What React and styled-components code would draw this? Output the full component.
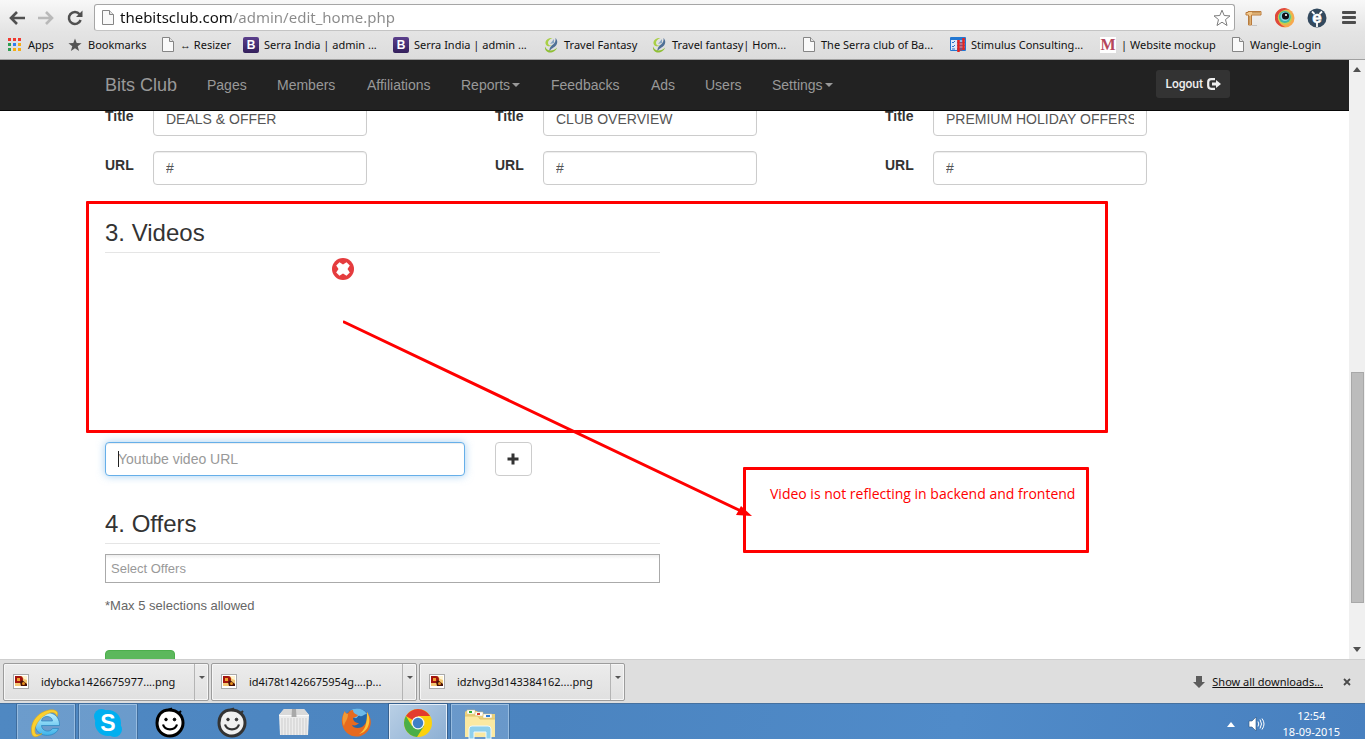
import React from "react";
import styled, { createGlobalStyle, css } from "styled-components";

const ui = `"Noto Sans", "Open Sans", sans-serif`;
const arial = `"Liberation Sans", Arial, sans-serif`;

const Global = createGlobalStyle`
  * { box-sizing: border-box; }
  html, body, #root { height: 100%; margin: 0; }
  body { overflow: hidden; background: #fff; }
  button, input { font: inherit; margin: 0; }
  svg { display: block; flex: none; }
`;

const Screen = styled.div`
  display: flex;
  flex-direction: column;
  height: 100vh;
  overflow: hidden;
`;

/* ---------- browser chrome ---------- */

const Chrome = styled.header`
  flex: none;
  background: linear-gradient(#f8f8f8, #e4e4e4 32px, #dcdcdc);
  border-bottom: 1px solid #a0a0a0;
  font-family: ${ui};
`;

const Toolbar = styled.div`
  display: flex;
  align-items: center;
  height: 32px;
  padding: 4px 0 1px 7px;
`;

const ToolButton = styled.button`
  display: flex;
  align-items: center;
  justify-content: center;
  flex: none;
  width: ${(p) => p.$w || 32}px;
  height: 27px;
  padding: 0;
  border: 0;
  background: none;
`;

const Omnibox = styled.div`
  display: flex;
  align-items: center;
  flex: 1;
  min-width: 0;
  height: 27px;
  margin: 0 2px 0 9px;
  padding: 0 3px 0 7px;
  background: #fff;
  border: 1px solid #a6a6a6;
  border-bottom-color: #c4c4c4;
  border-radius: 3px;
`;

const Address = styled.input`
  flex: 1;
  min-width: 0;
  height: 25px;
  margin-left: 6px;
  padding: 0 0 2px;
  border: 0;
  outline: 0;
  font-family: ${ui};
  font-size: 15px;
  color: transparent;
  background: linear-gradient(to right, #111 112px, #8a8a8a 112px);
  -webkit-background-clip: text;
  background-clip: text;
`;

const Bookmarks = styled.nav`
  display: flex;
  align-items: center;
  height: 27px;
  padding: 0 0 2px 8px;
`;

const Bookmark = styled.a`
  display: flex;
  align-items: center;
  gap: ${(p) => p.$gap || 5}px;
  flex: none;
  width: ${(p) => p.$w}px;
  font-size: 11px;
  line-height: 16px;
  white-space: nowrap;
  color: #111;
  text-decoration: none;
`;

const Badge = styled.span`
  display: flex;
  align-items: center;
  justify-content: center;
  flex: none;
  width: 16px;
  height: 16px;
  border-radius: ${(p) => (p.$serif ? 0 : 2)}px;
  background: ${(p) => (p.$serif ? "#fff" : "linear-gradient(#5b3f8c, #34205c)")};
  color: ${(p) => (p.$serif ? "#b5475c" : "#fff")};
  font: bold ${(p) => (p.$serif ? 16 : 12)}px/16px ${(p) => (p.$serif ? `"Liberation Serif", serif` : arial)};
`;

/* ---------- page ---------- */

const Viewport = styled.div`
  display: flex;
  flex: 1;
  min-height: 0;
`;

const Page = styled.main`
  display: flex;
  flex-direction: column;
  flex: 1;
  min-width: 0;
  background: #fff;
  color: #333;
  font: 14px/20px ${arial};
`;

const containerBox = css`
  width: 100%;
  max-width: 1171px;
  margin: 0 auto;
  padding: 0 15px 0 16px;
`;

const Navbar = styled.div`
  flex: none;
  background: #222;
  border-bottom: 1px solid #080808;
`;

const NavInner = styled.nav`
  ${containerBox}
  display: flex;
  height: 50px;
`;

const Brand = styled.a`
  width: 87px;
  padding: 15px 0;
  font-size: 18px;
  color: #999;
  text-decoration: none;
`;

const NavLink = styled.a`
  display: flex;
  align-items: center;
  gap: 2px;
  width: ${(p) => p.$w}px;
  padding: 0 0 0 15px;
  color: #999;
  text-decoration: none;
`;

const Caret = styled.span`
  border: 4px solid transparent;
  border-top-color: currentColor;
  border-bottom-width: 0;
`;

const Logout = styled.button`
  display: flex;
  align-items: center;
  gap: 4px;
  height: 28px;
  margin: 10px 15px 0 auto;
  padding: 0 9px;
  border: 0;
  border-radius: 3px;
  background: #333;
  color: #eee;
  font: 500 12px/18px Roboto, sans-serif;
`;

const Scroller = styled.div`
  flex: 1;
  min-height: 0;
  overflow: hidden;
`;

/* The form is scrolled part-way: its first row starts under the navbar. */
const Content = styled.form`
  ${containerBox}
  position: relative;
  margin-top: -9px;
`;

const Columns = styled.div`
  display: grid;
  grid-template-columns: repeat(3, 1fr);
  gap: 15px 30px;
`;

const Field = styled.label`
  display: grid;
  grid-template-columns: 48px 214px;
  font-weight: bold;
  line-height: 28px;
`;

const TextInput = styled.input`
  width: 100%;
  height: 34px;
  padding: 6px 12px;
  border: 1px solid #ccc;
  border-radius: 4px;
  outline: 0;
  background: #fff;
  box-shadow: inset 0 1px 1px rgba(0, 0, 0, 0.075);
  color: #555;
  font: 14px/20px ${arial};
  &::placeholder { color: #999; }
  ${(p) => p.$active && css`
    border-color: #66afe9;
    box-shadow: inset 0 1px 1px rgba(0, 0, 0, 0.075), 0 0 8px rgba(102, 175, 233, 0.6);
  `}
`;

const Heading = styled.h3`
  width: 555px;
  max-width: 100%;
  margin: 35px 0 0;
  padding-bottom: 6px;
  border-bottom: 1px solid #e5e5e5;
  font-size: 24px;
  font-weight: normal;
  line-height: 26px;
`;

const VideoFrame = styled.div`
  display: flex;
  justify-content: flex-end;
  align-items: flex-start;
  width: 249px;
  height: 189px;
  padding-top: 5px;
`;

const RemoveButton = styled.button`
  padding: 0;
  border: 0;
  background: none;
`;

const VideoRow = styled.div`
  display: flex;
  gap: 30px;
`;

const VideoField = styled.div`
  position: relative;
  width: 360px;
`;

const TextCursor = styled.span`
  position: absolute;
  left: 13px;
  top: 9px;
  width: 1px;
  height: 16px;
  background: #222;
`;

const AddButton = styled.button`
  display: flex;
  align-items: center;
  justify-content: center;
  width: 37px;
  height: 34px;
  padding: 0;
  border: 1px solid #ccc;
  border-radius: 4px;
  background: #fff;
`;

const OfferInput = styled.input`
  display: block;
  width: 555px;
  max-width: 100%;
  height: 29px;
  margin-top: 10px;
  padding: 0 5px;
  border: 1px solid #aaa;
  outline: 0;
  background: linear-gradient(#eee, #fff 4px);
  font: 13px/20px ${arial};
  &::placeholder { color: #999; }
`;

const Hint = styled.p`
  margin: 13px 0 34px;
  color: #666;
  font-size: 13px;
`;

const SaveButton = styled.button`
  display: block;
  width: 70px;
  height: 34px;
  border: 1px solid #4cae4c;
  border-radius: 4px;
  background: #5cb85c;
`;

/* ---------- red review marks laid over the page ---------- */

const Mark = styled.div`
  position: absolute;
  left: ${(p) => p.$x}px;
  top: ${(p) => p.$y}px;
  width: ${(p) => p.$w}px;
  height: ${(p) => p.$h}px;
  border: 3px solid #f00;
  border-radius: 1px;
  pointer-events: none;
`;

const MarkNote = styled.p`
  margin: 14px 0 0 24px;
  color: #f00;
  font: 14px/20px "Open Sans", sans-serif;
  white-space: nowrap;
`;

const Arrow = styled.svg`
  position: absolute;
  left: 254px;
  top: 218px;
  pointer-events: none;
`;

/* ---------- scrollbar ---------- */

const Scrollbar = styled.div`
  display: flex;
  flex-direction: column;
  align-items: center;
  flex: none;
  width: 16px;
  padding: 7px 0;
  background: #f0f0f0;
`;

const Thumb = styled.div`
  width: 13px;
  height: 231px;
  margin: auto 0 44px;
  border: 1px solid #a8a8a8;
  background: #bcbcbc;
`;

/* ---------- downloads ---------- */

const Downloads = styled.footer`
  display: flex;
  align-items: center;
  gap: 2px;
  flex: none;
  height: 44px;
  padding: 0 14px 0 3px;
  border-top: 1px solid #cfcfcf;
  background: #dedede;
  font: 11px/16px ${ui};
  color: #111;
`;

const DownloadItem = styled.div`
  display: flex;
  flex: none;
  width: 206px;
  height: 38px;
  border: 1px solid #9c9c9c;
  border-radius: 2px;
  background: linear-gradient(#ececec, #e0e0e0);
  box-shadow: inset 0 0 0 1px #f6f6f6;
`;

const FileButton = styled.button`
  display: flex;
  align-items: center;
  gap: 12px;
  flex: 1;
  min-width: 0;
  padding: 0 0 0 9px;
  border: 0;
  background: none;
  color: inherit;
  white-space: nowrap;
`;

const MenuButton = styled.button`
  display: flex;
  justify-content: center;
  width: 14px;
  padding: 12px 0 0;
  border: 0;
  border-left: 1px solid #b4b4b4;
  background: none;
  color: #555;
`;

const SmallCaret = styled.span`
  border: 3px solid transparent;
  border-top-color: currentColor;
  border-bottom-width: 0;
`;

const ShowAll = styled.a`
  margin: 0 18px 0 5px;
  color: #111;
  text-decoration: underline;
`;

const CloseButton = styled.button`
  padding: 0;
  border: 0;
  background: none;
`;

const Spacer = styled.div`
  flex: 1;
`;

/* ---------- taskbar ---------- */

const Taskbar = styled.footer`
  display: flex;
  gap: 4px;
  flex: none;
  height: 36px;
  padding-left: 17px;
  border-top: 1px solid #46719f;
  background: linear-gradient(100deg, #4f88c2, #4b84c0 40%, #508bc9 70%, #4880bf);
  color: #fff;
  font: 11px/16px ${ui};
`;

const Task = styled.button`
  display: flex;
  justify-content: center;
  width: 58px;
  padding: 3px 0 0;
  border: 0 solid transparent;
  border-width: 0 1px;
  background: none;
  ${(p) => p.$open && css`
    border-color: #97bce0;
    background: rgba(255, 255, 255, 0.17);
    box-shadow: inset 0 1px #9dc0e2, 0 0 0 1px #3f6d9e;
  `}
  ${(p) => p.$active && css`
    border-color: #e4eef8;
    background: linear-gradient(135deg, #b9cfe5, #8db0d4);
    box-shadow: inset 0 1px #e4eef8, 0 0 0 1px #37618f;
  `}
`;

const Tray = styled.div`
  display: flex;
  align-items: center;
  gap: 13px;
  margin: 5px 25px 0 auto;
`;

const Clock = styled.time`
  margin: 0 0 0 5px;
  text-align: center;
`;

/* ---------- drawings ---------- */

const PageIcon = () => (
  <svg width="12" height="15" viewBox="0 0 12 15">
    <path d="M.5.5h7l4 4v10H.5z" fill="#f9f9f9" stroke="#858585" />
    <path d="M7.5.5v4h4" fill="#e4e4e4" stroke="#858585" />
  </svg>
);

const BackIcon = ({ color }) => (
  <svg width="16" height="14" viewBox="0 0 16 14" fill="none" stroke={color} strokeWidth="2.6">
    <path d="M8 1 2 7l6 6M2.500 7H16" />
  </svg>
);

const ForwardIcon = ({ color }) => (
  <svg width="16" height="14" viewBox="0 0 16 14" fill="none" stroke={color} strokeWidth="2.6">
    <path d="m8 1 6 6-6 6M13.500 7H0" />
  </svg>
);

const ReloadIcon = () => (
  <svg width="16" height="16" viewBox="0 0 16 16">
    <path d="M12.600 4.200A6 6 0 1 0 13.600 10" fill="none" stroke="#505050" strokeWidth="2.500" />
    <path d="M15.500.5v6.500H9z" fill="#505050" />
  </svg>
);

const AppsIcon = () => (
  <svg width="14" height="14" viewBox="0 0 14 14">
    {["#f0392f", "#f0392f", "#f0392f", "#2f9e52", "#2f7df0", "#f5ac14", "#2f9e52", "#f5ac14", "#f5ac14"].map((c, i) => (
      <rect key={i} x={(i % 3) * 5} y={Math.floor(i / 3) * 5} width="3" height="3" fill={c} />
    ))}
  </svg>
);

const StarSolid = () => (
  <svg width="14" height="14" viewBox="0 0 14 14">
    <path d="m7 .5 1.700 4.600 4.900.2-3.900 3 1.400 4.700L7 10.300 2.900 13l1.400-4.700-3.900-3 4.900-.2z" fill="#555" />
  </svg>
);

const StarOutline = () => (
  <svg width="18" height="18" viewBox="0 0 18 18">
    <path d="m9 1.200 2.200 5.300 5.800.4-4.500 3.700 1.500 5.900-5-3.300-5 3.300 1.500-5.900L1 6.900l5.800-.4z" fill="#fff" stroke="#7d7d7d" strokeLinejoin="round" />
  </svg>
);

const RulerIcon = () => (
  <svg width="17" height="18" viewBox="0 0 17 18">
    <path d="M3 2.500h13v3.500H6.500V16h-3V6H1V3.500h2z" fill="#f3c98c" stroke="#b97b3d" />
    <path d="M8 3v1.500m2-1.500v1.500m2-1.500v1.500m2-1.500v1.500M4 8h1.500M4 10h1.500M4 12h1.500M4 14h1.500" stroke="#9c6a33" />
    <path d="M7 16.500h5" stroke="#c4c4c4" />
  </svg>
);

const EyeIcon = () => (
  <svg width="20" height="20" viewBox="0 0 20 20">
    <circle cx="10" cy="10" r="9.500" fill="#f7a84e" />
    <path d="M15 2A9.500 9.500 0 1 0 10 19 8 8 0 0 1 15 2z" fill="#e0483c" />
    <circle cx="10" cy="9.500" r="7.200" fill="#c4cf4c" />
    <circle cx="9.800" cy="9" r="6" fill="#3fb8a8" />
    <circle cx="10" cy="8.500" r="4.500" fill="#8fd6e6" />
    <circle cx="10.500" cy="8" r="3.600" fill="#101016" />
    <circle cx="11" cy="7" r="1.100" fill="#fff" />
  </svg>
);

const DarkEIcon = () => (
  <svg width="20" height="20" viewBox="0 0 20 20">
    <circle cx="10" cy="10" r="9.500" fill="#33495e" />
    <path d="M5 3.500 7.500 6M15 3.500 12.500 6M10 14v5" stroke="#fff" strokeWidth="1.800" />
    <text x="10" y="14.500" textAnchor="middle" fill="#fff" stroke="#fff" strokeWidth=".6" fontFamily="Liberation Sans, sans-serif" fontWeight="bold" fontSize="17">e</text>
  </svg>
);

const MenuIcon = () => (
  <svg width="14" height="13" viewBox="0 0 14 13" fill="#4d4d4d">
    <rect width="14" height="3" rx="1" />
    <rect y="5" width="14" height="3" rx="1" />
    <rect y="10" width="14" height="3" rx="1" />
  </svg>
);

const SwirlIcon = () => (
  <svg width="14" height="16" viewBox="0 0 14 16">
    <path d="M8.500 1C4 .5 1 3.500 1.500 6.500 2 9.500 6 10 9 8.500 6 9 4 8 4 6c0-2.500 2-4 4.500-5z" fill="#a9cf46" />
    <path d="M11.500 1c2 2 2.500 5 .5 7.500-2 2.300-5 2.800-6.500 6C5 11 7 9 9 7.500c1.800-1.500 3-3.500 2.500-6.500z" fill="#4f7096" />
    <path d="M10 2 6 7l4-1z" fill="#88a6c2" />
    <path d="M1 9.500c-.5 3.500 2 6 5 6s6-1.500 7-5c-1.500 2-4 3-6.500 3S2 12 1 9.500z" fill="#8fbf35" />
  </svg>
);

const ConsultIcon = () => (
  <svg width="16" height="15" viewBox="0 0 16 15">
    <rect width="16" height="14" rx="1" fill="#2277d2" />
    <rect x="1" y="3" width="6" height="10" fill="#dfeaf8" />
    <path d="m2 5 1 1 2-2M2 9l1 1 2-2M2 12h3" stroke="#2f6fc9" fill="none" />
    <path d="M7 4h8M7 7h8M7 10h8" stroke="#fff" strokeWidth="1" />
    <path d="M8.500 3v12M13.500 1v12" stroke="#e8231c" strokeWidth="2.500" />
    <path d="M11 5v9" stroke="#e8231c" strokeWidth="1" />
  </svg>
);

const LogoutIcon = () => (
  <svg width="14" height="12" viewBox="0 0 14 12">
    <path d="M8 1.200H4.200a3 3 0 0 0-3 3v3.600a3 3 0 0 0 3 3H8" fill="none" stroke="#eee" strokeWidth="2.200" />
    <path d="M5 4.500h4V2l5 4-5 4V7.500H5z" fill="#eee" />
  </svg>
);

const RemoveIcon = () => (
  <svg width="22" height="22" viewBox="0 0 22 22">
    <circle cx="11" cy="11" r="11" fill="#e53c3e" />
    <path d="M7.500 4.200 11 6.500l3.500-2.300 3.300 3.300-2.300 3.500 2.300 3.500-3.300 3.300-3.500-2.300-3.500 2.300-3.300-3.300L6.500 11 4.200 7.500z" fill="#fff" />
  </svg>
);

const PlusIcon = () => (
  <svg width="13" height="13" viewBox="0 0 13 13">
    <path d="M4.500.5h3v4h4v3h-4v4h-3v-4h-4v-3h4z" fill="#333" />
  </svg>
);

const Triangle = ({ up, color = "#505050" }) => (
  <svg width="8" height="5" viewBox="0 0 8 5">
    <path d={up ? "M4 0l4 5H0z" : "M0 0h8L4 5z"} fill={color} />
  </svg>
);

const FileIcon = () => (
  <svg width="16" height="15" viewBox="0 0 16 15">
    <rect x=".5" y=".5" width="15" height="14" fill="#fff" stroke="#a9a9a9" />
    <rect x="2" y="2" width="12" height="10" fill="#f4c873" />
    <path d="M2 2h5c4 0 4 6 0 7H2z" fill="#a3140d" />
    <path d="M9 2h5v4l-3-1z" fill="#fff3cf" />
    <rect x="4" y="4" width="3" height="3" fill="#f0a030" />
    <path d="M7 8 9 6l5 4v2H8z" fill="#4a1208" />
    <circle cx="10.500" cy="9.500" r="1.500" fill="#e8901c" />
  </svg>
);

const DownIcon = () => (
  <svg width="12" height="12" viewBox="0 0 12 12">
    <path d="M3 0h6v6h3l-6 6-6-6h3z" fill="#5c5c5c" />
  </svg>
);

const CloseIcon = () => (
  <svg width="8" height="8" viewBox="0 0 8 8">
    <path d="m1 1 6 6m0-6L1 7" stroke="#4a4a4a" strokeWidth="1.800" />
  </svg>
);

const IEIcon = () => (
  <svg width="32" height="32" viewBox="0 0 32 32">
    <defs>
      <linearGradient id="ie" x2="0" y2="1">
        <stop offset="0" stopColor="#c4f1fd" />
        <stop offset="1" stopColor="#3db3ea" />
      </linearGradient>
    </defs>
    <path d="M29.500 18.500H11.500c.3 6 8.500 7.500 11 3h6C25 31.500 5 31 5 17 5 2 30 1 29.500 18.500zM11.500 14h11c-.5-6-10.500-6-11 0z" fill="url(#ie)" stroke="#2784c0" strokeWidth=".7" />
    <path d="M27 9.500C33-3-.5 2 1.500 25c.8 7.500 7 4.500 10.500 1.500-4 1.800-6.500 1.500-7-1.500C3.500 13 24-1.500 27 9.500z" fill="#fbd02f" stroke="#d69d10" strokeWidth=".5" />
  </svg>
);

const SkypeIcon = () => (
  <svg width="32" height="32" viewBox="0 0 32 32">
    <circle cx="16" cy="16" r="13" fill="#00aff0" />
    <circle cx="9.500" cy="9.500" r="7.500" fill="#00aff0" />
    <circle cx="22.500" cy="22.500" r="7.500" fill="#00aff0" />
    <text x="16" y="24" textAnchor="middle" fill="#fff" fontFamily="Liberation Sans, sans-serif" fontWeight="bold" fontSize="23">S</text>
  </svg>
);

const SmileIcon = ({ ink, face }) => (
  <svg width="32" height="32" viewBox="0 0 32 32" fill="none" stroke={ink}>
    <path d="M15 3C7 3 3 9 3 16c0 8 6 13 13 13s13-6 13-13S24 3 15 3z" fill={face} strokeWidth="3" />
    <path d="m14 3 4-1.500M25 6l2-2" strokeWidth="2" />
    <path d="M9 17.500c2 6.500 12 6.500 14 0" strokeWidth="2.200" />
    <circle cx="12" cy="12.500" r="1.300" fill={ink} />
    <circle cx="20.500" cy="12.500" r="1.300" fill={ink} />
  </svg>
);

const BoxIcon = () => (
  <svg width="32" height="32" viewBox="0 0 32 32">
    <path d="M6 2h20l5 6-1 20H2L1 8z" fill="#ececec" />
    <path d="M6 2h20l5 6H1z" fill="#d9d9d9" />
    <path d="M4 11v17m3-17v17m3-17v17m3-17v17m3-17v17m3-17v17m3-17v17m3-17v17m3-17v17" stroke="#cdcdcd" />
    <path d="M1 8.500h30" stroke="#fafafa" />
    <path d="M14 2h4l.5 8h-5z" fill="#a9a9a9" />
  </svg>
);

const FirefoxIcon = () => (
  <svg width="32" height="32" viewBox="0 0 32 32">
    <circle cx="17" cy="14" r="12.500" fill="#2465a8" />
    <path d="M10 4c5-4 13-3 17 3-3 0-4 3-7 2s-2 3-5 2-4-4-5-7z" fill="#6db9e8" />
    <path d="M5 4c-5 7-4 17 2 22 8 7 20 3 23-6 2-6 0-11-3-15 1 5 0 12-5 15-4 2-9 1-10-2 3 1 5 0 7-2-3 0-6-2-6-5 2-1 4-1 5-3-3-1-5-2-5-5-2 0-4 1-5 3C6 7 5 6 5 4z" fill="#e66a1f" />
    <path d="M27 5c5 8 2 20-8 22 6-4 8-9 8-22z" fill="#fbc33a" />
    <path d="M5 4c-3 5-3 11-1 15 1-5 4-6 4-12-2 0-3-1-3-3z" fill="#f19a35" />
  </svg>
);

const ChromeIcon = () => (
  <svg width="32" height="32" viewBox="0 0 32 32">
    <circle cx="16" cy="16" r="14" fill="#fcd20b" />
    <path d="M16 16 3.900 9A14 14 0 0 1 28.100 9H16z" fill="#e33b2e" />
    <path d="M3.900 9A14 14 0 0 0 15 30l7-11-6-3-6 3z" fill="#4aae48" />
    <circle cx="16" cy="16" r="6.500" fill="#f4f4f4" />
    <circle cx="16" cy="16" r="5.200" fill="#3f7fc6" />
  </svg>
);

const FolderIcon = () => (
  <svg width="34" height="32" viewBox="0 0 34 32">
    <path d="M3 4h11l2 3h16v23H2V5z" fill="#ecd27c" />
    <path d="M4 3h8v4H4zM12 5h8v4h-8zM20 7h9v4h-9z" fill="#fff" stroke="#d9c27a" strokeWidth=".5" />
    <path d="M6 4h3v2H6z" fill="#2bad36" />
    <path d="M14 6h3v2h-3z" fill="#d83a2b" />
    <path d="M23 8h4v2h-4z" fill="#2f7fd8" />
    <path d="M2 9h13l2 3h15v18H2z" fill="#fbe9a2" />
    <path d="M2 9h13l2 3h15" fill="none" stroke="#e3c56c" />
    <path d="M6 32V22q0-3 3-3h16q3 0 3 3v10h-5v-7H11v7z" fill="#8fd0ec" stroke="#eaf8fe" />
  </svg>
);

const SpeakerIcon = () => (
  <svg width="17" height="16" viewBox="0 0 17 16" fill="none" stroke="#fff">
    <path d="M1 5h3l4-4v14l-4-4H1z" fill="#fff" stroke="#2c5580" strokeWidth=".6" />
    <path d="M10 5.500q1.500 2.500 0 5M12 3.500q3 4.500 0 9M14 2.500q4 5.500 0 11" />
  </svg>
);

/* ---------- data ---------- */

const bookmarks = [
  ["Apps", 60, <AppsIcon />, 6],
  ["Bookmarks", 94, <StarSolid />, 6],
  ["↔ Resizer", 81, <PageIcon />, 6],
  ["Serra India | admin ...", 150, <Badge>B</Badge>, 5],
  ["Serra India | admin ...", 151, <Badge>B</Badge>, 5],
  ["Travel Fantasy", 108, <SwirlIcon />, 6],
  ["Travel fantasy| Hom...", 151, <SwirlIcon />, 6],
  ["The Serra club of Ba...", 147, <PageIcon />, 6],
  ["Stimulus Consulting...", 150, <ConsultIcon />, 5],
  ["| Website mockup", 132, <Badge $serif>M</Badge>, 5],
  ["Wangle-Login", 94, <PageIcon />, 6],
];

const navLinks = [
  ["Pages", 70],
  ["Members", 90],
  ["Affiliations", 94],
  ["Reports", 90, true],
  ["Feedbacks", 100],
  ["Ads", 54],
  ["Users", 67],
  ["Settings", 92, true],
];

const titles = ["DEALS & OFFER", "CLUB OVERVIEW", "PREMIUM HOLIDAY OFFERS"];
const files = ["idybcka1426675977....png", "id4i78t1426675954g....p...", "idzhvg3d143384162....png"];

const tasks = [
  ["Internet Explorer", <IEIcon />, true],
  ["Skype", <SkypeIcon />, true],
  ["Balsamiq", <SmileIcon ink="#000" face="#fff" />],
  ["Balsamiq Mockups", <SmileIcon ink="#333" face="#f0f0f0" />],
  ["Package", <BoxIcon />],
  ["Firefox", <FirefoxIcon />],
  ["Chrome", <ChromeIcon />, true, true],
  ["File Explorer", <FolderIcon />, true],
];

export default function App() {
  return (
    <Screen>
      <Global />
      <Chrome>
        <Toolbar>
          <ToolButton $w={20} aria-label="Back"><BackIcon color="#505050" /></ToolButton>
          <ToolButton $w={38} aria-label="Forward"><ForwardIcon color="#b9b9b9" /></ToolButton>
          <ToolButton $w={20} aria-label="Reload"><ReloadIcon /></ToolButton>
          <Omnibox>
            <PageIcon />
            <Address aria-label="Address" defaultValue="thebitsclub.com/admin/edit_home.php" spellCheck={false} />
            <StarOutline />
          </Omnibox>
          <ToolButton aria-label="Page ruler"><RulerIcon /></ToolButton>
          <ToolButton aria-label="Colour picker"><EyeIcon /></ToolButton>
          <ToolButton aria-label="Extension"><DarkEIcon /></ToolButton>
          <ToolButton aria-label="Menu"><MenuIcon /></ToolButton>
        </Toolbar>
        <Bookmarks>
          {bookmarks.map(([label, w, icon, gap], i) => (
            <Bookmark key={i} href="#" $w={w} $gap={gap}>{icon}{label}</Bookmark>
          ))}
        </Bookmarks>
      </Chrome>

      <Viewport>
        <Page>
          <Navbar>
            <NavInner>
              <Brand href="#">Bits Club</Brand>
              {navLinks.map(([label, w, menu]) => (
                <NavLink key={label} href="#" $w={w}>{label}{menu && <Caret />}</NavLink>
              ))}
              <Logout>Logout <LogoutIcon /></Logout>
            </NavInner>
          </Navbar>
          <Scroller>
            <Content onSubmit={(e) => e.preventDefault()}>
              <Columns>
                {titles.map((t) => (
                  <Field key={t}>Title<TextInput defaultValue={t} /></Field>
                ))}
                {titles.map((t) => (
                  <Field key={t + "-url"}>URL<TextInput defaultValue="#" /></Field>
                ))}
              </Columns>

              <Heading>3. Videos</Heading>
              <VideoFrame>
                <RemoveButton type="button" aria-label="Remove video"><RemoveIcon /></RemoveButton>
              </VideoFrame>
              <VideoRow>
                <VideoField>
                  <TextInput $active aria-label="Youtube video URL" placeholder="Youtube video URL" />
                  <TextCursor />
                </VideoField>
                <AddButton type="button" aria-label="Add video"><PlusIcon /></AddButton>
              </VideoRow>

              <Heading>4. Offers</Heading>
              <OfferInput aria-label="Select Offers" placeholder="Select Offers" />
              <Hint>*Max 5 selections allowed</Hint>
              <SaveButton aria-label="Save" />

              <Mark $x={-3} $y={99} $w={1022} $h={232} />
              <Mark $x={654} $y={365} $w={346} $h={86}>
                <MarkNote>Video is not reflecting in backend and frontend</MarkNote>
              </Mark>
              <Arrow width="412" height="200" viewBox="0 0 412 200">
                <path d="M1 2 398 191" stroke="#f00" strokeWidth="3" strokeLinecap="round" />
                <path d="m409 196-16-1 5-9z" fill="#f00" />
              </Arrow>
            </Content>
          </Scroller>
        </Page>
        <Scrollbar>
          <Triangle up />
          <Thumb />
          <Triangle />
        </Scrollbar>
      </Viewport>

      <Downloads>
        {files.map((f) => (
          <DownloadItem key={f}>
            <FileButton><FileIcon />{f}</FileButton>
            <MenuButton aria-label="File options"><SmallCaret /></MenuButton>
          </DownloadItem>
        ))}
        <Spacer />
        <DownIcon />
        <ShowAll href="#">Show all downloads...</ShowAll>
        <CloseButton aria-label="Close"><CloseIcon /></CloseButton>
      </Downloads>

      <Taskbar>
        {tasks.map(([name, icon, open, active]) => (
          <Task key={name} aria-label={name} $open={open} $active={active}>{icon}</Task>
        ))}
        <Tray>
          <Triangle up color="#fff" />
          <SpeakerIcon />
          <Clock>12:54<br />18-09-2015</Clock>
        </Tray>
      </Taskbar>
    </Screen>
  );
}
